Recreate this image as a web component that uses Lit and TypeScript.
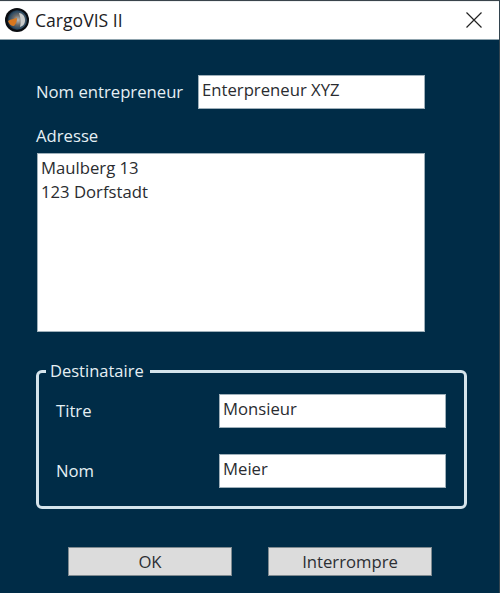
import { LitElement, html, css } from "lit";
import { customElement } from "lit/decorators.js";

@customElement("app-root")
export class AppRoot extends LitElement {
  static styles = css`
    :host {
      display: block;
      width: 500px;
      height: 593px;
      overflow: hidden;
      font-family: "Open Sans", "Noto Sans", sans-serif;
      font-size: 16.7px;
      color: #1f2328;
    }
    * { box-sizing: border-box; }
    .window {
      width: 500px;
      height: 593px;
      display: flex;
      flex-direction: column;
      background: #002c47;
      border-top: 1px solid #3a444b;
      border-right: 1px solid #33444f;
    }
    .titlebar {
      height: 39px;
      flex: none;
      background: #fff;
      display: flex;
      align-items: center;
      padding: 0 16px 2px 5px;
      gap: 6px;
      border-top: 1px solid #eef0f1;
      border-bottom: 1px solid #8fa3ad;
    }
    .titlebar .name { font-size: 17.6px; flex: 1; color: #1c2024; }
    .logo { width: 24px; height: 24px; flex: none; display: block; }
    .close { width: 18px; height: 18px; display: block; flex: none; }
    .body {
      flex: 1;
      display: flex;
      flex-direction: column;
      padding: 35px 0 0 36px;
    }
    .row { display: flex; align-items: center; }
    .label { color: #e6f0f4; line-height: 22px; }
    .field {
      background: #fff;
      border: 1px solid #9fb0ba;
      height: 34px;
      padding: 0 3px;
      line-height: 28px;
      display: block;
      color: #2a2c30;
    }
    .first { width: 389px; }
    .first .label { width: 162px; }
    .first .field { width: 227px; }
    .addr-label { margin-top: 16px; }
    .area {
      margin-top: 6px;
      margin-left: 1px;
      width: 388px;
      height: 179px;
      background: #fff;
      border: 1px solid #9fb0ba;
      padding: 2px 3px;
      line-height: 24px;
      color: #2a2c30;
    }
    fieldset {
      margin: 28px 0 0 0;
      padding: 12px 18px 0 17px;
      width: 431px;
      height: 149px;
      border: 3px solid #d5e4ec;
      border-radius: 6px;
      min-width: 0;
    }
    legend {
      padding: 0 6px 0 4px;
      margin-left: -10px;
      color: #e6f0f4;
      line-height: 22px;
      font-size: 16.5px;
    }
    .grow { width: 390px; justify-content: space-between; }
    .grow + .grow { margin-top: 26px; }
    .grow .field { width: 227px; }
    .buttons {
      display: flex;
      gap: 36px;
      margin: 38px 0 0 32px;
    }
    .btn {
      width: 164px;
      height: 29px;
      background: #dcdcdc;
      border: 1px solid #7f8a90;
      display: flex;
      align-items: center;
      justify-content: center;
      color: #2c2f33;
      padding: 0;
      font: inherit;
    }
  `;

  render() {
    return html`
      <div class="window">
        <div class="titlebar">
          <svg class="logo" viewBox="0 0 24 24">
            <defs>
              <radialGradient id="g" cx="0.55" cy="0.5" r="0.55">
                <stop offset="0" stop-color="#b9bcbb" />
                <stop offset="0.45" stop-color="#6b6a68" />
                <stop offset="0.8" stop-color="#2b4a63" />
                <stop offset="1" stop-color="#0c0f14" />
              </radialGradient>
            </defs>
            <circle cx="12" cy="12" r="12" fill="#0a0c10" />
            <circle cx="12" cy="12" r="10" fill="url(#g)" />
            <path d="M3 13c3-2 6-2 9-3 0 3-1 6-3 8-3 0-5-2-6-5z" fill="#d7771f" />
            <path d="M14 5c3 0 6 3 6 7s-2 6-5 7c1-4 1-9-1-14z" fill="#c9cbcb" />
          </svg>
          <span class="name">CargoVIS II</span>
          <svg class="close" viewBox="0 0 18 18">
            <path d="M1.5 1.5l15 15M16.5 1.5l-15 15" stroke="#222" stroke-width="1.2" fill="none" />
          </svg>
        </div>
        <div class="body">
          <div class="row first">
            <span class="label">Nom entrepreneur</span>
            <span class="field">Enterpreneur XYZ</span>
          </div>
          <div class="label addr-label">Adresse</div>
          <div class="area">Maulberg 13<br />123 Dorfstadt</div>
          <fieldset>
            <legend>Destinataire</legend>
            <div class="row grow">
              <span class="label">Titre</span>
              <span class="field">Monsieur</span>
            </div>
            <div class="row grow">
              <span class="label">Nom</span>
              <span class="field">Meier</span>
            </div>
          </fieldset>
          <div class="buttons">
            <button class="btn">OK</button>
            <button class="btn">Interrompre</button>
          </div>
        </div>
      </div>
    `;
  }
}
